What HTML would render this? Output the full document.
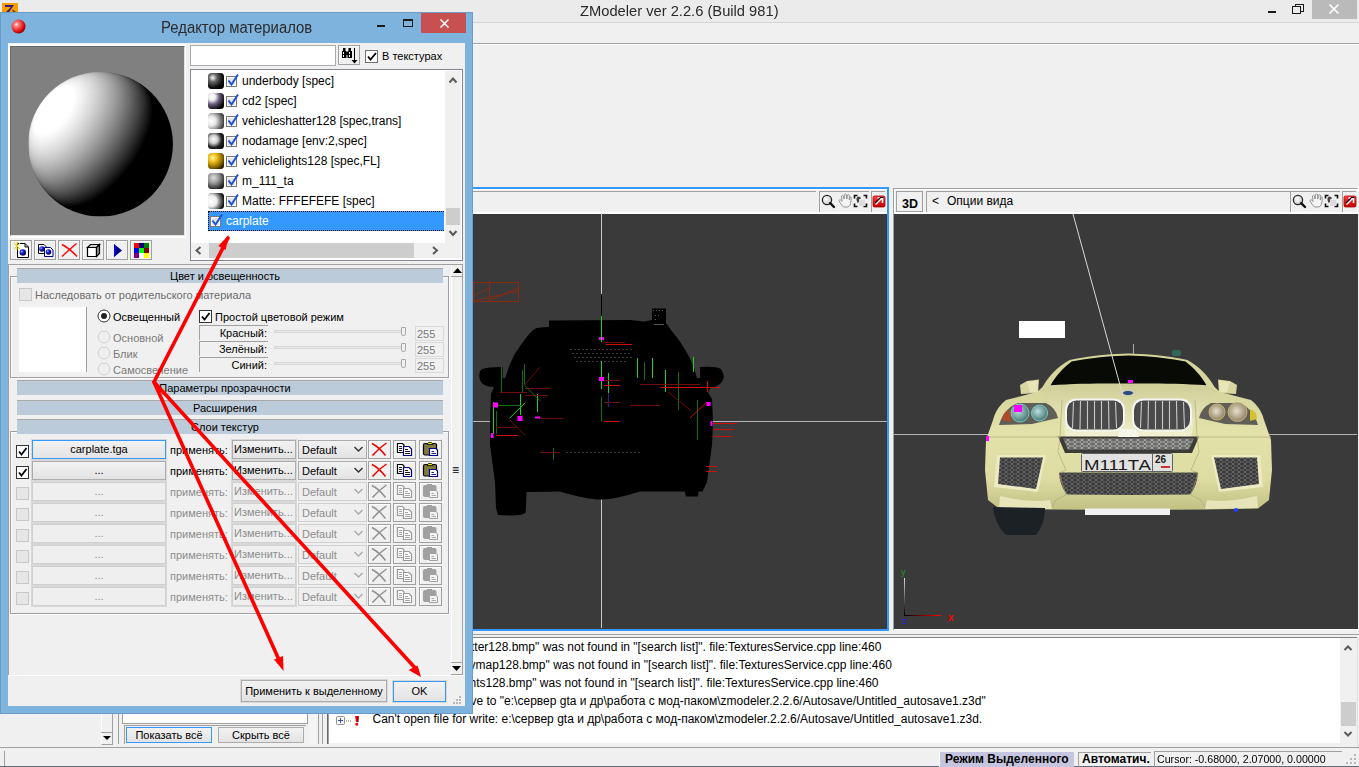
<!DOCTYPE html><html><head><meta charset="utf-8"><style>
*{margin:0;padding:0;box-sizing:border-box}
html,body{width:1359px;height:767px;overflow:hidden;background:#f0f0f0;font-family:"Liberation Sans",sans-serif;}
body div,body svg{position:absolute}
</style></head><body><div style="left:0px;top:0px;width:1359px;height:22px;background:#ebebeb"></div>
<div style="left:0px;top:22px;width:1359px;height:1px;background:#d5d5d5"></div>
<div style="left:580px;top:2px;white-space:pre;font-size:15px;line-height:18px;color:#2a2a2a;transform:scaleX(0.98);transform-origin:0 0">ZModeler ver 2.2.6 (Build 981)</div>
<div style="left:2px;top:3px;width:16px;height:9px;background:#f5a000"></div>
<svg style="left:2px;top:3px" width="16" height="9"><path d="M3 2H12L7 9H4L9 4H3Z" fill="#3a1a80"/><path d="M10 6L14 9H11Z" fill="#6a3a10"/></svg>
<div style="left:1268px;top:11px;width:8px;height:2px;background:#1a1a1a"></div>
<svg style="left:1292px;top:4px" width="12" height="10"><rect x="3.5" y="0.5" width="8" height="7" fill="none" stroke="#1a1a1a"/><rect x="0.5" y="2.5" width="8" height="7" fill="#ebebeb" stroke="#1a1a1a"/></svg>
<div style="left:1312px;top:0px;width:45px;height:19px;background:#bababa"></div>
<svg style="left:1328px;top:3px" width="12" height="12"><path d="M1.5 1.5L10.5 10.5M10.5 1.5L1.5 10.5" stroke="#fff" stroke-width="1.6"/></svg>
<div style="left:0px;top:43px;width:1359px;height:1px;background:#a0a0a0"></div>
<div style="left:0px;top:44px;width:1359px;height:1px;background:#ffffff"></div>
<div style="left:440px;top:187px;width:449px;height:444px;background:#3399ff"></div>
<div style="left:440px;top:189px;width:447px;height:25px;background:#f0f0f0;border-top:1px solid #fff"></div>
<div style="left:440px;top:212px;width:447px;height:2px;background:#ffffff"></div>
<div style="left:440px;top:214px;width:447px;height:415px;background:#3a3a3a"></div>
<div style="left:440px;top:191px;width:376px;height:21px;border-top:1px solid #a0a0a0;border-left:1px solid #a0a0a0"></div>
<div style="left:819px;top:191px;width:50px;height:21px;border-top:1px solid #a0a0a0;border-left:1px solid #a0a0a0"></div>
<div style="left:871px;top:191px;width:14px;height:21px;border-top:1px solid #a0a0a0;border-left:1px solid #a0a0a0"></div>
<svg style="left:819px;top:191px" width="68" height="21">
<defs><radialGradient id="lens819" cx="0.4" cy="0.4" r="0.6"><stop offset="0" stop-color="#fff"/><stop offset="1" stop-color="#c8c8c8"/></radialGradient>
<linearGradient id="red819" x1="0" y1="0" x2="0" y2="1"><stop offset="0" stop-color="#ff4040"/><stop offset="1" stop-color="#c00000"/></linearGradient></defs>
<circle cx="8" cy="9" r="4.6" fill="url(#lens819)" stroke="#2a2a2a" stroke-width="1.3"/>
<path d="M11.2 12.2L15 16" stroke="#111" stroke-width="2.4" stroke-linecap="round"/>
<path d="M20.5 11 Q19.5 9 21 8.5 L23 10.5 L22.5 5 Q23.5 3.5 24.5 5 L25 8 L25.5 3.5 Q26.5 2.5 27.5 3.5 L27.8 8 L28.5 4 Q29.5 3 30.3 4.2 L30.3 9 L31 6 Q32 5.5 32.3 6.8 L31.8 12 Q31 15 29 16 L24.5 16 Q22.5 14 20.5 11Z" fill="#f4f4f4" stroke="#8a8a8a" stroke-width="0.9"/>
<path d="M35.5 7.5V4.5H38.5M44.5 4.5H47.5V7.5M47.5 12.5V15.5H44.5M38.5 15.5H35.5V12.5" stroke="#111" stroke-width="1.6" fill="none"/>
<rect x="40" y="9" width="6" height="6" fill="#dcdcdc"/>
<path d="M37.5 9Q37 6 39.5 5.5Q41.5 5.5 42 7.5L40 8.5L40 11L38.5 12Z" fill="#444"/>
<rect x="54" y="5" width="12" height="11" rx="1.5" fill="url(#red819)" stroke="#b00000" stroke-width="0.8"/>
<path d="M56.5 13.5L63 7M58.5 7H63.5V12" stroke="#fff" stroke-width="1.5" fill="none"/>
<path d="M56 12L61.5 6.5H64.5" stroke="#000" stroke-width="1.1" fill="none"/>
</svg>
<svg style="left:0;top:0" width="889" height="631" viewBox="0 0 889 631">
<line x1="601.5" y1="213" x2="601.5" y2="628" stroke="#c8c8c8" stroke-width="1"/>
<line x1="473" y1="421.5" x2="887" y2="421.5" stroke="#b4b4b4" stroke-width="1"/>
<g stroke="#8a2a10" stroke-width="1" fill="none"><rect x="473.5" y="282.5" width="45" height="19"/><line x1="489.5" y1="282" x2="489.5" y2="302"/><line x1="473" y1="296" x2="489" y2="288"/><line x1="489" y1="301" x2="518" y2="288"/><line x1="473" y1="301" x2="518" y2="291"/></g>
<line x1="601.5" y1="294" x2="601.5" y2="318" stroke="#000" stroke-width="1"/>
<path fill="#000" d="M549 323 L549 320.5 L630 320 L644 321.5 L652 320 L667 324 L670.5 329.5 Q679 339 685 349.5 Q691 359 694 368 L697 378 L700 378 L700 367 Q716 366 721 369 Q725 375 723 380 Q720 386 710 388.5 L708 392.5 L712 399 L713 421 L712 445 L707 482 L702.5 491.5 L698.5 491.5 L698 496.5 L686 496.5 L684.6 491.5 L640 491.5 Q615 499.5 601 499.5 Q587 499.5 560 491.5 L526.6 492 L525.6 513 Q522 515.5 510 515.5 L498 515 L496 508 L495 482 L490 445 L490 421 L491 394 L494 387 Q482 386.5 480 380 Q478 372 482 369 Q487 367 502.6 367 L502.6 378 L505.2 378.2 L509 366.5 L514.3 354.8 L520.8 345 L527.4 335.9 L532.6 330.6 L536.5 328 L549 326.7 Z"/>
<path fill="#000" d="M652 308.5 L666 308.5 L666 326 L652 326 Z"/>
<g stroke="#8a8a8a" stroke-width="1" stroke-dasharray="2 2" opacity="0.4"><line x1="570" y1="349.5" x2="632" y2="349.5"/><line x1="572" y1="353.5" x2="630" y2="353.5"/><line x1="574" y1="357.5" x2="632" y2="357.5"/><line x1="576" y1="361.5" x2="628" y2="361.5"/><line x1="566" y1="452.5" x2="640" y2="452.5"/></g>
<g fill="#555"><rect x="653" y="310" width="1" height="1"/><rect x="656" y="310" width="1" height="1"/><rect x="659" y="310" width="1" height="1"/><rect x="662" y="310" width="1" height="1"/><rect x="655" y="315" width="1" height="1"/><rect x="658" y="315" width="1" height="1"/><rect x="655" y="319" width="1" height="1"/><rect x="654" y="324" width="10" height="1"/></g>
<g stroke-width="1">
<line x1="501.5" y1="367" x2="501.5" y2="392" stroke="#0f6e0f"/>
<line x1="522.5" y1="370" x2="522.5" y2="392" stroke="#0f6e0f"/>
<line x1="524.5" y1="364" x2="524.5" y2="385" stroke="#0f6e0f"/>
<line x1="520.5" y1="394" x2="520.5" y2="415" stroke="#22d022"/>
<line x1="537.5" y1="394" x2="537.5" y2="412" stroke="#22d022"/>
<line x1="493.5" y1="402" x2="493.5" y2="434" stroke="#22d022"/>
<line x1="496.5" y1="411" x2="496.5" y2="434" stroke="#0f6e0f"/>
<line x1="601.5" y1="316" x2="601.5" y2="342" stroke="#22d022"/>
<line x1="601.5" y1="361" x2="601.5" y2="389" stroke="#22d022"/>
<line x1="601.5" y1="397" x2="601.5" y2="421" stroke="#0f6e0f"/>
<line x1="608.5" y1="373" x2="608.5" y2="393" stroke="#22d022"/>
<line x1="608.5" y1="393" x2="608.5" y2="407" stroke="#1a2a8a"/>
<line x1="553.5" y1="448" x2="553.5" y2="460" stroke="#0f6e0f"/>
<line x1="637.5" y1="358" x2="637.5" y2="378" stroke="#22d022"/>
<line x1="644.5" y1="362" x2="644.5" y2="380" stroke="#0f6e0f"/>
<line x1="652.5" y1="358" x2="652.5" y2="378" stroke="#22d022"/>
<line x1="665.5" y1="370" x2="665.5" y2="392" stroke="#22d022"/>
<line x1="678.5" y1="372" x2="678.5" y2="410" stroke="#0f6e0f"/>
<line x1="693.5" y1="357" x2="693.5" y2="372" stroke="#22d022"/>
<line x1="697.5" y1="400" x2="697.5" y2="440" stroke="#0f6e0f"/>
<line x1="707.5" y1="381" x2="707.5" y2="392" stroke="#c81010"/>
<line x1="525" y1="388.5" x2="550" y2="388.5" stroke="#700c0c"/>
<line x1="500" y1="392.5" x2="527" y2="392.5" stroke="#700c0c"/>
<line x1="525" y1="395.5" x2="548" y2="395.5" stroke="#700c0c"/>
<line x1="539" y1="418.5" x2="563" y2="418.5" stroke="#700c0c"/>
<line x1="496" y1="427.5" x2="518" y2="427.5" stroke="#700c0c"/>
<line x1="496" y1="435.5" x2="518" y2="435.5" stroke="#c81010"/>
<line x1="604" y1="380.5" x2="620" y2="380.5" stroke="#700c0c"/>
<line x1="604" y1="385.5" x2="620" y2="385.5" stroke="#c81010"/>
<line x1="604" y1="402.5" x2="620" y2="402.5" stroke="#700c0c"/>
<line x1="604" y1="421.5" x2="620" y2="421.5" stroke="#c81010"/>
<line x1="604" y1="342.5" x2="625" y2="342.5" stroke="#700c0c"/>
<line x1="606" y1="344.5" x2="632" y2="344.5" stroke="#c81010"/>
<line x1="640" y1="384.5" x2="700" y2="384.5" stroke="#700c0c"/>
<line x1="660" y1="387.5" x2="720" y2="387.5" stroke="#c81010"/>
<line x1="630" y1="405.5" x2="660" y2="405.5" stroke="#700c0c"/>
<line x1="713" y1="423.5" x2="737" y2="423.5" stroke="#c81010"/>
<line x1="713" y1="429.5" x2="734" y2="429.5" stroke="#c81010"/>
<line x1="713" y1="436.5" x2="732" y2="436.5" stroke="#c81010"/>
<line x1="706" y1="466.5" x2="717" y2="466.5" stroke="#c81010"/>
<line x1="706" y1="471.5" x2="717" y2="471.5" stroke="#c81010"/>
<line x1="540" y1="452.5" x2="560" y2="452.5" stroke="#700c0c"/>
<line x1="524.6" y1="385.4" x2="540.3" y2="401" stroke="#0f6e0f"/><line x1="509.7" y1="418" x2="525.4" y2="402.6" stroke="#22d022"/><line x1="497" y1="405.5" x2="521" y2="405.5" stroke="#0f6e0f"/>
<line x1="509.7" y1="419.8" x2="525.4" y2="435.5" stroke="#700c0c"/><line x1="524.6" y1="385" x2="540" y2="367" stroke="#700c0c"/><line x1="690" y1="418" x2="707" y2="402" stroke="#c81010"/><line x1="668" y1="392" x2="690" y2="410" stroke="#700c0c"/>
</g>
<g fill="#ff00ff"><rect x="599" y="337" width="2" height="3"/><rect x="602" y="337" width="2" height="3"/><rect x="599" y="377" width="5" height="4"/><rect x="493" y="402.5" width="5" height="5"/><rect x="517.5" y="416" width="5" height="5"/><rect x="535" y="416.5" width="5" height="2"/><rect x="491" y="433" width="2.5" height="5"/><rect x="706.5" y="402" width="4" height="4"/><rect x="710.5" y="421" width="2" height="5"/></g>
</svg>
<div style="left:893px;top:188px;width:465px;height:442px;background:#f0f0f0;border-top:1px solid #a0a0a0;border-left:1px solid #a0a0a0;border-right:1px solid #ffffff"></div>
<div style="left:894px;top:189px;width:463px;height:24px;border-top:1px solid #fff;border-left:1px solid #fff"></div>
<div style="left:894px;top:212px;width:463px;height:2px;background:#fff"></div>
<div style="left:894px;top:214px;width:464px;height:415px;background:#3a3a3a"></div>
<div style="left:894px;top:629px;width:464px;height:1px;background:#fff"></div>
<div style="left:896px;top:191px;width:27px;height:21px;border-top:1px solid #a0a0a0;border-left:1px solid #a0a0a0;border-right:1px solid #a0a0a0;border-bottom:1px solid #a0a0a0;background:#f0f0f0"></div>
<div style="left:902px;top:197px;white-space:pre;font-size:12.5px;line-height:14px;color:#000;font-weight:bold">3D</div>
<div style="left:926px;top:191px;width:364px;height:21px;border-top:1px solid #a0a0a0;border-left:1px solid #a0a0a0"></div>
<div style="left:932px;top:194px;white-space:pre;font-size:12px;line-height:14px;color:#000">&lt;</div>
<div style="left:947px;top:194px;white-space:pre;font-size:12px;line-height:14px;color:#000">Опции вида</div>
<div style="left:1290px;top:191px;width:50px;height:21px;border-top:1px solid #a0a0a0;border-left:1px solid #a0a0a0"></div>
<div style="left:1342px;top:191px;width:14px;height:21px;border-top:1px solid #a0a0a0;border-left:1px solid #a0a0a0"></div>
<svg style="left:1290px;top:191px" width="68" height="21">
<defs><radialGradient id="lens1290" cx="0.4" cy="0.4" r="0.6"><stop offset="0" stop-color="#fff"/><stop offset="1" stop-color="#c8c8c8"/></radialGradient>
<linearGradient id="red1290" x1="0" y1="0" x2="0" y2="1"><stop offset="0" stop-color="#ff4040"/><stop offset="1" stop-color="#c00000"/></linearGradient></defs>
<circle cx="8" cy="9" r="4.6" fill="url(#lens1290)" stroke="#2a2a2a" stroke-width="1.3"/>
<path d="M11.2 12.2L15 16" stroke="#111" stroke-width="2.4" stroke-linecap="round"/>
<path d="M20.5 11 Q19.5 9 21 8.5 L23 10.5 L22.5 5 Q23.5 3.5 24.5 5 L25 8 L25.5 3.5 Q26.5 2.5 27.5 3.5 L27.8 8 L28.5 4 Q29.5 3 30.3 4.2 L30.3 9 L31 6 Q32 5.5 32.3 6.8 L31.8 12 Q31 15 29 16 L24.5 16 Q22.5 14 20.5 11Z" fill="#f4f4f4" stroke="#8a8a8a" stroke-width="0.9"/>
<path d="M35.5 7.5V4.5H38.5M44.5 4.5H47.5V7.5M47.5 12.5V15.5H44.5M38.5 15.5H35.5V12.5" stroke="#111" stroke-width="1.6" fill="none"/>
<rect x="40" y="9" width="6" height="6" fill="#dcdcdc"/>
<path d="M37.5 9Q37 6 39.5 5.5Q41.5 5.5 42 7.5L40 8.5L40 11L38.5 12Z" fill="#444"/>
<rect x="54" y="5" width="12" height="11" rx="1.5" fill="url(#red1290)" stroke="#b00000" stroke-width="0.8"/>
<path d="M56.5 13.5L63 7M58.5 7H63.5V12" stroke="#fff" stroke-width="1.5" fill="none"/>
<path d="M56 12L61.5 6.5H64.5" stroke="#000" stroke-width="1.1" fill="none"/>
</svg>
<svg style="left:0;top:0" width="1359" height="631" viewBox="0 0 1359 631">
<defs>
<linearGradient id="bodyg" gradientUnits="userSpaceOnUse" x1="0" y1="353" x2="0" y2="510"><stop offset="0" stop-color="#d4d39a"/><stop offset="0.3" stop-color="#d8d7a0"/><stop offset="0.5" stop-color="#e3e2aa"/><stop offset="0.8" stop-color="#dddca2"/><stop offset="1" stop-color="#c2c184"/></linearGradient>
<linearGradient id="hoodg" gradientUnits="userSpaceOnUse" x1="0" y1="384" x2="0" y2="437"><stop offset="0" stop-color="#cfce98"/><stop offset="0.6" stop-color="#e2e1b2"/><stop offset="1" stop-color="#f2f1d4"/></linearGradient>
<radialGradient id="lampT" cx="0.4" cy="0.4" r="0.6"><stop offset="0" stop-color="#b8e0dc"/><stop offset="1" stop-color="#4a7a78"/></radialGradient>
<radialGradient id="lampB" cx="0.45" cy="0.45" r="0.6"><stop offset="0" stop-color="#e8e0c8"/><stop offset="1" stop-color="#8a7e62"/></radialGradient>
<linearGradient id="axx" gradientUnits="userSpaceOnUse" x1="904" y1="0" x2="941" y2="0"><stop offset="0" stop-color="#000"/><stop offset="1" stop-color="#f00"/></linearGradient>
<linearGradient id="axy" gradientUnits="userSpaceOnUse" x1="0" y1="615" x2="0" y2="578"><stop offset="0" stop-color="#000"/><stop offset="1" stop-color="#ddd"/></linearGradient>
<pattern id="mesh" width="6" height="4" patternUnits="userSpaceOnUse"><rect width="6" height="4" fill="#3a3a3a"/><path d="M0 2H2L3 0.5H5L6 2M2 2L3 3.5H5L6 2" stroke="#7a7a7a" stroke-width="0.6" fill="none"/></pattern>
<pattern id="mesh2" width="7" height="4" patternUnits="userSpaceOnUse"><rect width="7" height="4" fill="#6a6a68"/><path d="M0 2H2L3 0.5H5L6 2H7M2 2L3 3.5H5L6 2" stroke="#b8b8b4" stroke-width="0.7" fill="none"/></pattern>
<g id="halfdet">
<path d="M1020 385 L1027 381 L1039 379.5 L1038 393 L1021 394 Z" fill="#d8d6a0"/>
<path d="M1027 382 L1038 380.5 L1037.5 392 L1030 392Z" fill="#e8e6b8"/>
<path d="M999 425 Q1004 408 1018 403 L1046 403 Q1056 408 1058 418 L1032 424 Z" fill="#5f5f58"/>
<path d="M1062 400 L1060 437 L1058 452 L1066 470 L1059 473 L1066 495 L1056 500 L1051 509" stroke="#a8a572" stroke-width="1" opacity="0.6" fill="none"/>
<path d="M997 455 L1046 455 L1038 492 L994 487 Z" fill="#ecebc2"/>
<path d="M1000 457.5 L1043 457.5 L1036 489 L998 484 Z" fill="url(#mesh)"/>
<path d="M1000 496 Q1030 503 1050 500 L1052 509 L999 508 Z" fill="#e6e5ba"/>
<path d="M986 437 L1060 437" stroke="#bdbb88" stroke-width="1"/>
<rect x="1065" y="398.5" width="60" height="33" rx="11" fill="#f4f4f0"/>
<rect x="1067" y="400.5" width="56" height="29" rx="9.5" fill="#4a4a4a"/>
<g stroke="#c8c8c8" stroke-width="1.1"><line x1="1073.5" y1="402" x2="1072.5" y2="428"/><line x1="1080.5" y1="401" x2="1080" y2="429"/><line x1="1087.5" y1="401" x2="1087.5" y2="429"/><line x1="1094.5" y1="401" x2="1094.5" y2="429"/><line x1="1101.5" y1="401" x2="1101.5" y2="429"/><line x1="1108.5" y1="401" x2="1109" y2="429"/><line x1="1115.5" y1="402" x2="1116.5" y2="428"/></g>
</g>
</defs>
<line x1="894" y1="434.5" x2="1357" y2="434.5" stroke="#b4b4b4" stroke-width="1"/>
<rect x="1019" y="321" width="46" height="17" fill="#fff"/>
<line x1="1133.5" y1="344" x2="1133.5" y2="356" stroke="#aaa"/>
<rect x="1172" y="350" width="9" height="6" rx="2" fill="#2f6a58"/>
<path d="M1128.50 353.50 L1122.78 353.65 L1117.03 353.92 L1111.24 354.29 L1105.41 354.76 L1099.55 355.35 L1093.65 356.04 L1087.72 356.85 L1081.75 357.76 L1075.74 358.77 L1069.70 359.90 L1066.24 361.99 L1062.95 364.22 L1059.82 366.58 L1056.85 369.08 L1054.05 371.73 L1051.41 374.50 L1048.94 377.42 L1046.63 380.48 L1044.48 383.67 L1042.50 387.00 L1037.00 392.00 L1006.00 400.00 L1004.07 401.64 L1002.28 403.36 L1000.63 405.16 L999.12 407.04 L997.75 409.00 L996.52 411.04 L995.43 413.16 L994.48 415.36 L993.67 417.64 L993.00 420.00 L986.00 440.00 L985.00 470.00 L988.00 500.00 L999.00 508.50 L1050.00 509.50 L1128.50 510.00 L1128.50 510.00 L1207.00 509.50 L1258.00 508.50 L1269.00 500.00 L1272.00 470.00 L1271.00 440.00 L1264.00 420.00 L1263.33 417.64 L1262.52 415.36 L1261.57 413.16 L1260.48 411.04 L1259.25 409.00 L1257.88 407.04 L1256.37 405.16 L1254.72 403.36 L1252.93 401.64 L1251.00 400.00 L1220.00 392.00 L1214.50 387.00 L1212.52 383.67 L1210.37 380.48 L1208.06 377.42 L1205.59 374.50 L1202.95 371.73 L1200.15 369.08 L1197.18 366.58 L1194.05 364.22 L1190.76 361.99 L1187.30 359.90 L1181.26 358.77 L1175.25 357.76 L1169.28 356.85 L1163.35 356.04 L1157.45 355.35 L1151.59 354.76 L1145.76 354.29 L1139.97 353.92 L1134.22 353.65 L1128.50 353.50Z" fill="url(#bodyg)"/>
<path d="M1128.50 355.50 L1122.80 355.65 L1117.10 355.90 L1111.40 356.25 L1105.70 356.70 L1100.00 357.25 L1094.30 357.90 L1088.60 358.65 L1082.90 359.50 L1077.20 360.45 L1071.50 361.50 L1068.86 363.63 L1066.34 365.81 L1063.95 368.04 L1061.68 370.33 L1059.53 372.68 L1057.50 375.07 L1055.59 377.52 L1053.80 380.03 L1052.14 382.59 L1050.60 385.20 L1058.47 384.79 L1066.32 384.43 L1074.16 384.12 L1081.98 383.87 L1089.78 383.68 L1097.56 383.53 L1105.32 383.44 L1113.06 383.41 L1120.79 383.43 L1128.50 383.50 L1128.50 383.50 L1136.21 383.43 L1143.94 383.41 L1151.68 383.44 L1159.44 383.53 L1167.22 383.68 L1175.02 383.87 L1182.84 384.12 L1190.68 384.43 L1198.53 384.79 L1206.40 385.20 L1204.86 382.59 L1203.20 380.03 L1201.41 377.52 L1199.50 375.07 L1197.47 372.68 L1195.32 370.33 L1193.05 368.04 L1190.66 365.81 L1188.14 363.63 L1185.50 361.50 L1179.80 360.45 L1174.10 359.50 L1168.40 358.65 L1162.70 357.90 L1157.00 357.25 L1151.30 356.70 L1145.60 356.25 L1139.90 355.90 L1134.20 355.65 L1128.50 355.50Z" fill="#080a06"/>
<path d="M1128.50 384.00 L1120.79 383.93 L1113.04 383.92 L1105.26 383.97 L1097.46 384.08 L1089.62 384.25 L1081.76 384.48 L1073.87 384.77 L1065.94 385.12 L1057.98 385.53 L1050.00 386.00 L1040.00 390.00 L1062.00 420.00 L1066.00 437.00 L1128.50 437.00 L1128.50 437.00 L1191.00 437.00 L1195.00 420.00 L1217.00 390.00 L1207.00 386.00 L1199.02 385.53 L1191.06 385.12 L1183.13 384.77 L1175.24 384.48 L1167.38 384.25 L1159.54 384.08 L1151.74 383.97 L1143.96 383.92 L1136.21 383.93 L1128.50 384.00Z" fill="url(#hoodg)"/>
<path d="M1128.50 436.50 L1058.00 436.50 L1065.00 453.00 L1128.50 453.00 L1128.50 453.00 L1192.00 453.00 L1199.00 436.50 L1128.50 436.50Z" fill="#3a3a36"/>
<path d="M1128.50 438.50 L1063.00 438.50 L1068.00 449.50 L1128.50 449.50 L1128.50 449.50 L1189.00 449.50 L1194.00 438.50 L1128.50 438.50Z" fill="url(#mesh2)"/>
<path d="M1128.50 472.50 L1059.00 472.50 L1059.26 475.15 L1059.64 477.70 L1060.14 480.15 L1060.76 482.50 L1061.50 484.75 L1062.36 486.90 L1063.34 488.95 L1064.44 490.90 L1065.66 492.75 L1067.00 494.50 L1128.50 495.00 L1128.50 495.00 L1190.00 494.50 L1191.34 492.75 L1192.56 490.90 L1193.66 488.95 L1194.64 486.90 L1195.50 484.75 L1196.24 482.50 L1196.86 480.15 L1197.36 477.70 L1197.74 475.15 L1198.00 472.50 L1128.50 472.50Z" fill="url(#mesh)"/>
<use href="#halfdet"/>
<use href="#halfdet" transform="translate(2257 0) scale(-1 1)"/>
<path d="M1128.50 429.00 L1120.00 429.00 L1118.00 437.00 L1128.50 437.00 L1128.50 437.00 L1139.00 437.00 L1137.00 429.00 L1128.50 429.00Z" fill="#f6f6e8"/>
<circle cx="1020" cy="413" r="9" fill="url(#lampT)" stroke="#7cc8c4" stroke-width="1"/>
<circle cx="1039.5" cy="413" r="8" fill="url(#lampT)" stroke="#7cc8c4" stroke-width="1"/>
<path d="M1002 420 Q1003 411 1010 410 L1011 422 Z" fill="#b04a28"/>
<rect x="1014" y="405" width="8" height="7" fill="#ff00ff"/>
<circle cx="1217" cy="412" r="8" fill="url(#lampB)" stroke="#c8b070" stroke-width="1"/>
<circle cx="1237.5" cy="412" r="9.5" fill="url(#lampB)" stroke="#c8b070" stroke-width="1"/>
<path d="M1250 409 Q1257 411 1257 419 L1250 421 Z" fill="#d4c030"/>
<ellipse cx="1128" cy="393" rx="5.5" ry="2.5" fill="#2a4a78" stroke="#d8d8d8" stroke-width="0.8"/>
<rect x="1081.5" y="453.5" width="91" height="18" rx="1" fill="#e2e2e0" stroke="#606060"/>
<line x1="1152.5" y1="454" x2="1152.5" y2="471" stroke="#606060"/>
<text x="1084" y="469.5" font-family="Liberation Sans" font-size="15.5" fill="#1a1a1a" textLength="67" lengthAdjust="spacingAndGlyphs">М111ТА</text>
<text x="1155" y="463" font-family="Liberation Sans" font-size="10" font-weight="bold" fill="#1a1a1a">26</text>
<rect x="1161" y="466" width="9" height="2" fill="#d03030"/>
<path d="M993 507 L1045 508 Q1045 524 1036 535 L1006 535 Q995 525 993 507 Z" fill="#1c2126"/>
<rect x="1085" y="508.5" width="85" height="6.5" fill="#f0f0f0"/>
<line x1="1073" y1="214" x2="1123" y2="396" stroke="#d8d8d8" stroke-width="1"/>
<rect x="1128" y="380" width="5" height="3" fill="#ff00ff"/>
<rect x="986" y="436" width="3" height="5" fill="#ff00ff"/>
<circle cx="1236" cy="510" r="2" fill="#2040ff"/>
<line x1="904.5" y1="578" x2="904.5" y2="615" stroke="url(#axy)" stroke-width="1"/>
<line x1="904" y1="615.5" x2="941" y2="615.5" stroke="url(#axx)" stroke-width="1"/>
<text x="901" y="575" font-family="Liberation Sans" font-size="9" fill="#1a9a1a">y</text>
<text x="948" y="621" font-family="Liberation Sans" font-size="10" font-weight="bold" fill="#ff0000">x</text>
<text x="902" y="624" font-family="Liberation Sans" font-size="9" fill="#2020ff">z</text>
</svg>
<div style="left:0px;top:631px;width:1359px;height:116px;background:#f0f0f0"></div>
<div style="left:327px;top:634px;width:1032px;height:1px;background:#a0a0a0"></div>
<div style="left:327px;top:637px;width:1031px;height:1px;background:#808080"></div>
<div style="left:328px;top:638px;width:1028px;height:105px;background:#ffffff"></div>
<div style="left:1340px;top:638px;width:16px;height:105px;background:#f0f0f0"></div>
<div style="left:1357px;top:637px;width:1px;height:110px;background:#e0e0e0"></div>
<div style="left:1341px;top:702px;width:15px;height:24px;background:#cdcdcd"></div>
<svg style="left:1340px;top:638px" width="16" height="105"><path d="M4.5 12L8 8.5L11.5 12" stroke="#5a5a5a" stroke-width="2" fill="none"/><path d="M4.5 94L8 97.5L11.5 94" stroke="#5a5a5a" stroke-width="2" fill="none"/></svg>
<div style="left:271px;top:639px;width:200px;text-align:right;white-space:pre;font-size:12px;line-height:16px;color:#000">Texture "vehiclesha</div>
<div style="left:471px;top:639px;white-space:pre;font-size:12px;line-height:16px;color:#000">tter128.bmp" was not found in "[search list]". file:TexturesService.cpp line:460</div>
<div style="left:269.5px;top:657px;width:200px;text-align:right;white-space:pre;font-size:12px;line-height:16px;color:#000">Texture "vehiclegre</div>
<div style="left:469.5px;top:657px;white-space:pre;font-size:12px;line-height:16px;color:#000">ymap128.bmp" was not found in "[search list]". file:TexturesService.cpp line:460</div>
<div style="left:269.5px;top:675px;width:200px;text-align:right;white-space:pre;font-size:12px;line-height:16px;color:#000">Texture "vehiclelig</div>
<div style="left:469.5px;top:675px;white-space:pre;font-size:12px;line-height:16px;color:#000">hts128.bmp" was not found in "[search list]". file:TexturesService.cpp line:460</div>
<div style="left:270.5px;top:693px;width:200px;text-align:right;white-space:pre;font-size:12px;line-height:16px;color:#000">Autosa</div>
<div style="left:470.5px;top:693px;white-space:pre;font-size:12px;line-height:16px;color:#000">ve to "e:\сервер gta и др\работа с мод-паком\zmodeler.2.2.6/Autosave/Untitled_autosave1.z3d"</div>
<div style="left:372.5px;top:711px;white-space:pre;font-size:12px;line-height:16px;color:#000">Can't open file for write: e:\сервер gta и др\работа с мод-паком\zmodeler.2.2.6/Autosave/Untitled_autosave1.z3d.</div>
<div style="left:122px;top:705px;width:186px;height:19px;background:#fff;border:1px solid #a0a0a0;border-top:none"></div>
<div style="left:124px;top:725px;width:182px;height:19px;border-top:1px solid #a0a0a0;border-left:1px solid #a0a0a0"></div>
<div style="left:126px;top:727px;width:86px;height:16px;background:linear-gradient(#f2f2f2,#e3e3e3);border:1px solid #3399ff"></div>
<div style="left:126px;top:728px;width:86px;white-space:pre;font-size:11px;line-height:14px;color:#000;text-align:center">Показать всё</div>
<div style="left:218px;top:727px;width:86px;height:16px;background:linear-gradient(#f2f2f2,#e3e3e3);border:1px solid #acacac"></div>
<div style="left:218px;top:728px;width:86px;white-space:pre;font-size:11px;line-height:14px;color:#000;text-align:center">Скрыть всё</div>
<div style="left:101px;top:705px;width:12px;height:40px;background:#f0f0f0;border-left:1px solid #fff;border-right:1px solid #a0a0a0;border-bottom:1px solid #a0a0a0"></div>
<div style="left:101px;top:732px;width:11px;height:1px;background:#a0a0a0"></div>
<svg style="left:103px;top:736px" width="8" height="5"><path d="M0 0H8L4 4Z" fill="#000"/></svg>
<div style="left:118px;top:705px;width:1px;height:39px;background:#a0a0a0"></div>
<div style="left:309px;top:705px;width:9px;height:39px;background:#f4f4f4"></div>
<div style="left:318px;top:705px;width:1px;height:39px;background:#a0a0a0"></div>
<div style="left:322px;top:705px;width:1px;height:39px;background:#a0a0a0"></div>
<div style="left:327px;top:705px;width:1px;height:39px;background:#696969"></div>
<div style="left:328px;top:705px;width:1px;height:39px;background:#a0a0a0"></div>
<svg style="left:336px;top:716px" width="26" height="10"><rect x="0.5" y="0.5" width="8" height="8" rx="1" fill="#fafafa" stroke="#909090"/><path d="M2 4.5H7M4.5 2V7" stroke="#3050a0"/><path d="M10 5H11M12 5H13M14 5H15" stroke="#666"/><path d="M19 0H23L22 6H20Z" fill="#f00"/><rect x="19.5" y="7" width="2.5" height="2.5" fill="#e00"/><path d="M22 1V6" stroke="#000" stroke-width="0.8"/></svg>
<div style="left:0px;top:747px;width:1359px;height:1px;background:#a0a0a0"></div>
<div style="left:0px;top:748px;width:1359px;height:18px;background:#f0f0f0"></div>
<div style="left:0px;top:766px;width:1359px;height:1px;background:#5f6e7c"></div>
<div style="left:4px;top:751px;width:1px;height:15px;background:#a0a0a0"></div>
<div style="left:939px;top:752px;width:135px;height:15px;background:#c5c5e0;border-left:1px solid #fff"></div>
<div style="left:945px;top:752px;white-space:pre;font-size:12px;line-height:14px;font-weight:bold;color:#000">Режим Выделенного</div>
<div style="left:1078px;top:752px;width:73px;height:15px;border-left:1px solid #a0a0a0;border-top:1px solid #a0a0a0"></div>
<div style="left:1082px;top:752px;white-space:pre;font-size:12px;line-height:14px;font-weight:bold;color:#000">Автоматич.</div>
<div style="left:1154px;top:751px;width:188px;height:16px;border-left:1px solid #a0a0a0;border-top:1px solid #a0a0a0"></div>
<div style="left:1157px;top:752px;white-space:pre;font-size:11.5px;line-height:14px;color:#000;transform:scaleX(0.925);transform-origin:0 0">Cursor: -0.68000, 2.07000, 0.00000</div>
<svg style="left:1343px;top:752px" width="16" height="15"><g fill="#b8b8b8"><rect x="11" y="2" width="2" height="2"/><rect x="7" y="6" width="2" height="2"/><rect x="11" y="6" width="2" height="2"/><rect x="3" y="10" width="2" height="2"/><rect x="7" y="10" width="2" height="2"/><rect x="11" y="10" width="2" height="2"/></g></svg>
<div style="left:0px;top:12px;width:473px;height:702px;background:#7eb3de;border:1px solid #6a9cc8"></div>
<div style="left:8px;top:43px;width:457px;height:663px;background:#f0f0f0"></div>
<div style="left:161px;top:19px;white-space:pre;font-size:16px;line-height:18px;color:#2b2b2b;transform:scaleX(0.93);transform-origin:0 0">Редактор материалов</div>
<svg style="left:11px;top:19px" width="16" height="16"><defs><radialGradient id="rb" cx="35%" cy="35%" r="65%"><stop offset="0" stop-color="#fff"/><stop offset=".25" stop-color="#ff7a7a"/><stop offset=".8" stop-color="#e01010"/><stop offset="1" stop-color="#900"/></radialGradient></defs><circle cx="7.5" cy="7.5" r="7" fill="url(#rb)"/></svg>
<div style="left:377px;top:25px;width:8px;height:2px;background:#1a1a1a"></div>
<div style="left:403px;top:19px;width:10px;height:8px;border:1px solid #1a1a1a;border-top-width:2px"></div>
<div style="left:421px;top:13px;width:45px;height:20px;background:#c75050"></div>
<svg style="left:437px;top:16px" width="14" height="14"><path d="M3.5 3.5L11.5 11.5M11.5 3.5L3.5 11.5" stroke="#fff" stroke-width="1.5"/></svg>
<div style="left:8px;top:44px;width:178px;height:194px;background:#fff"></div>
<div style="left:10px;top:46px;width:175px;height:190px;background:#808080;border-top:1px solid #696969;border-left:1px solid #696969;border-right:1px solid #e3e3e3;border-bottom:1px solid #e3e3e3"></div>
<svg style="left:0;top:0" width="190" height="240"><defs>
<linearGradient id="sphlg" gradientUnits="userSpaceOnUse" x1="158.83" y1="187.09" x2="42.17" y2="101.31"><stop offset="0" stop-color="#000"/><stop offset="1" stop-color="#fff"/></linearGradient>
<radialGradient id="sphdm" gradientUnits="userSpaceOnUse" cx="72.4" cy="72.4" r="72.4"><stop offset="0.0000" stop-color="rgb(255,255,255)"/><stop offset="0.0208" stop-color="rgb(255,255,255)"/><stop offset="0.0417" stop-color="rgb(255,255,255)"/><stop offset="0.0625" stop-color="rgb(255,255,255)"/><stop offset="0.0833" stop-color="rgb(254,254,254)"/><stop offset="0.1042" stop-color="rgb(254,254,254)"/><stop offset="0.1250" stop-color="rgb(253,253,253)"/><stop offset="0.1458" stop-color="rgb(252,252,252)"/><stop offset="0.1667" stop-color="rgb(251,251,251)"/><stop offset="0.1875" stop-color="rgb(250,250,250)"/><stop offset="0.2083" stop-color="rgb(249,249,249)"/><stop offset="0.2292" stop-color="rgb(248,248,248)"/><stop offset="0.2500" stop-color="rgb(247,247,247)"/><stop offset="0.2708" stop-color="rgb(245,245,245)"/><stop offset="0.2917" stop-color="rgb(244,244,244)"/><stop offset="0.3125" stop-color="rgb(242,242,242)"/><stop offset="0.3333" stop-color="rgb(240,240,240)"/><stop offset="0.3542" stop-color="rgb(238,238,238)"/><stop offset="0.3750" stop-color="rgb(236,236,236)"/><stop offset="0.3958" stop-color="rgb(234,234,234)"/><stop offset="0.4167" stop-color="rgb(232,232,232)"/><stop offset="0.4375" stop-color="rgb(229,229,229)"/><stop offset="0.4583" stop-color="rgb(227,227,227)"/><stop offset="0.4792" stop-color="rgb(224,224,224)"/><stop offset="0.5000" stop-color="rgb(221,221,221)"/><stop offset="0.5208" stop-color="rgb(218,218,218)"/><stop offset="0.5417" stop-color="rgb(214,214,214)"/><stop offset="0.5625" stop-color="rgb(211,211,211)"/><stop offset="0.5833" stop-color="rgb(207,207,207)"/><stop offset="0.6042" stop-color="rgb(203,203,203)"/><stop offset="0.6250" stop-color="rgb(199,199,199)"/><stop offset="0.6458" stop-color="rgb(195,195,195)"/><stop offset="0.6667" stop-color="rgb(190,190,190)"/><stop offset="0.6875" stop-color="rgb(185,185,185)"/><stop offset="0.7083" stop-color="rgb(180,180,180)"/><stop offset="0.7292" stop-color="rgb(175,175,175)"/><stop offset="0.7500" stop-color="rgb(169,169,169)"/><stop offset="0.7708" stop-color="rgb(162,162,162)"/><stop offset="0.7917" stop-color="rgb(156,156,156)"/><stop offset="0.8125" stop-color="rgb(149,149,149)"/><stop offset="0.8333" stop-color="rgb(141,141,141)"/><stop offset="0.8542" stop-color="rgb(133,133,133)"/><stop offset="0.8750" stop-color="rgb(123,123,123)"/><stop offset="0.8958" stop-color="rgb(113,113,113)"/><stop offset="0.9167" stop-color="rgb(102,102,102)"/><stop offset="0.9375" stop-color="rgb(89,89,89)"/><stop offset="0.9583" stop-color="rgb(73,73,73)"/><stop offset="0.9792" stop-color="rgb(52,52,52)"/><stop offset="1.0000" stop-color="rgb(0,0,0)"/></radialGradient>
<rect id="sphdome" x="0" y="0" width="144.8" height="144.8" fill="url(#sphdm)"/>
<filter id="sphfl" filterUnits="userSpaceOnUse" x="28.099999999999994" y="71.79999999999998" width="144.8" height="144.8" color-interpolation-filters="sRGB">
<feImage href="#sphdome" result="dome"/>
<feComposite in="SourceGraphic" in2="dome" operator="arithmetic" k1="0" k2="1.8584" k3="0.5504" k4="-0.9292"/>
</filter>
<clipPath id="sphcp"><circle cx="100.5" cy="144.2" r="72.4"/></clipPath>
</defs>
<g clip-path="url(#sphcp)"><rect x="28.099999999999994" y="71.79999999999998" width="144.8" height="144.8" fill="url(#sphlg)" filter="url(#sphfl)"/></g></svg>
<div style="left:190px;top:45px;width:146px;height:21px;background:#fff;border:1px solid #acacac"></div>
<div style="left:338px;top:45px;width:22px;height:20px;background:#f0f0f0;border:1px solid #a0a0a0;box-shadow:inset 1px 1px 0 #fff"></div>
<svg style="left:338px;top:45px" width="22" height="20"><rect x="4" y="6" width="4.5" height="7" fill="#000"/><rect x="5" y="3" width="2.5" height="4" fill="#000"/><rect x="9.5" y="6" width="4.5" height="7" fill="#000"/><rect x="10.5" y="3" width="2.5" height="4" fill="#000"/><rect x="8" y="7" width="2" height="3" fill="#000"/><rect x="5" y="7" width="1" height="2" fill="#fff"/><rect x="11" y="7" width="1" height="2" fill="#fff"/><rect x="5" y="10" width="1" height="2" fill="#fff"/><rect x="11" y="10" width="1" height="2" fill="#fff"/><path d="M16.5 3V18" stroke="#000"/><path d="M13.5 15L16.5 18.5L19.5 15Z" fill="#000"/></svg>
<div style="left:365px;top:50px;width:13px;height:13px;background:#fff;border:1px solid #707070"></div>
<svg style="left:366px;top:51px" width="12" height="11"><path d="M2 5.5L4.5 8.5L10 2" stroke="#000" stroke-width="1.8" fill="none"/></svg>
<div style="left:382px;top:49px;white-space:pre;font-size:11px;line-height:14px;color:#000">В текстурах</div>
<div style="left:190px;top:69px;width:273px;height:192px;background:#fff;border:1px solid #828790"></div>
<svg style="left:208px;top:73px" width="16" height="16"><defs><radialGradient id="ic0" cx="0.3" cy="0.3" r="0.85"><stop offset="0" stop-color="#fff"/><stop offset="0.3" stop-color="#666"/><stop offset="0.7" stop-color="#111"/><stop offset="1" stop-color="#000"/></radialGradient></defs><rect x="0" y="0" width="16" height="16" rx="3.5" fill="url(#ic0)"/></svg>
<div style="left:226px;top:76px;width:11px;height:11px;background:#e6e6e6;border:1px solid #7a7a7a;box-shadow:inset 0 0 0 1px #fff"></div>
<svg style="left:226px;top:73px" width="14" height="14"><path d="M2.5 7.5L5.5 11.5L12 1.5" stroke="#1c4fd8" stroke-width="1.9" fill="none"/></svg>
<div style="left:242px;top:73px;white-space:pre;font-size:12px;line-height:16px;color:#000">underbody [spec]</div>
<svg style="left:208px;top:93px" width="16" height="16"><defs><radialGradient id="ic1" cx="0.25" cy="0.25" r="0.85"><stop offset="0" stop-color="#fff"/><stop offset="0.25" stop-color="#eee"/><stop offset="0.55" stop-color="#6a5a7a"/><stop offset="1" stop-color="#000"/></radialGradient></defs><rect x="0" y="0" width="16" height="16" rx="3.5" fill="url(#ic1)"/></svg>
<div style="left:226px;top:96px;width:11px;height:11px;background:#e6e6e6;border:1px solid #7a7a7a;box-shadow:inset 0 0 0 1px #fff"></div>
<svg style="left:226px;top:93px" width="14" height="14"><path d="M2.5 7.5L5.5 11.5L12 1.5" stroke="#1c4fd8" stroke-width="1.9" fill="none"/></svg>
<div style="left:242px;top:93px;white-space:pre;font-size:12px;line-height:16px;color:#000">cd2 [spec]</div>
<svg style="left:208px;top:113px" width="16" height="16"><defs><radialGradient id="ic2" cx="0.2" cy="0.5" r="0.85"><stop offset="0" stop-color="#fff"/><stop offset="0.35" stop-color="#e8e8e8"/><stop offset="0.7" stop-color="#808080"/><stop offset="1" stop-color="#333"/></radialGradient></defs><rect x="0" y="0" width="16" height="16" rx="3.5" fill="url(#ic2)"/></svg>
<div style="left:226px;top:116px;width:11px;height:11px;background:#e6e6e6;border:1px solid #7a7a7a;box-shadow:inset 0 0 0 1px #fff"></div>
<svg style="left:226px;top:113px" width="14" height="14"><path d="M2.5 7.5L5.5 11.5L12 1.5" stroke="#1c4fd8" stroke-width="1.9" fill="none"/></svg>
<div style="left:242px;top:113px;white-space:pre;font-size:12px;line-height:16px;color:#000">vehicleshatter128 [spec,trans]</div>
<svg style="left:208px;top:133px" width="16" height="16"><defs><radialGradient id="ic3" cx="0.35" cy="0.4" r="0.85"><stop offset="0" stop-color="#fff"/><stop offset="0.3" stop-color="#ccc"/><stop offset="0.6" stop-color="#222"/><stop offset="1" stop-color="#000"/></radialGradient></defs><rect x="0" y="0" width="16" height="16" rx="3.5" fill="url(#ic3)"/></svg>
<div style="left:226px;top:136px;width:11px;height:11px;background:#e6e6e6;border:1px solid #7a7a7a;box-shadow:inset 0 0 0 1px #fff"></div>
<svg style="left:226px;top:133px" width="14" height="14"><path d="M2.5 7.5L5.5 11.5L12 1.5" stroke="#1c4fd8" stroke-width="1.9" fill="none"/></svg>
<div style="left:242px;top:133px;white-space:pre;font-size:12px;line-height:16px;color:#000">nodamage [env:2,spec]</div>
<svg style="left:208px;top:153px" width="16" height="16"><defs><radialGradient id="ic4" cx="0.3" cy="0.3" r="0.85"><stop offset="0" stop-color="#fff8b0"/><stop offset="0.3" stop-color="#f0c020"/><stop offset="0.7" stop-color="#8a6a00"/><stop offset="1" stop-color="#201800"/></radialGradient></defs><rect x="0" y="0" width="16" height="16" rx="3.5" fill="url(#ic4)"/></svg>
<div style="left:226px;top:156px;width:11px;height:11px;background:#e6e6e6;border:1px solid #7a7a7a;box-shadow:inset 0 0 0 1px #fff"></div>
<svg style="left:226px;top:153px" width="14" height="14"><path d="M2.5 7.5L5.5 11.5L12 1.5" stroke="#1c4fd8" stroke-width="1.9" fill="none"/></svg>
<div style="left:242px;top:153px;white-space:pre;font-size:12px;line-height:16px;color:#000">vehiclelights128 [spec,FL]</div>
<svg style="left:208px;top:173px" width="16" height="16"><defs><radialGradient id="ic5" cx="0.35" cy="0.3" r="0.85"><stop offset="0" stop-color="#ddd"/><stop offset="0.4" stop-color="#999"/><stop offset="0.8" stop-color="#333"/><stop offset="1" stop-color="#111"/></radialGradient></defs><rect x="0" y="0" width="16" height="16" rx="3.5" fill="url(#ic5)"/></svg>
<div style="left:226px;top:176px;width:11px;height:11px;background:#e6e6e6;border:1px solid #7a7a7a;box-shadow:inset 0 0 0 1px #fff"></div>
<svg style="left:226px;top:173px" width="14" height="14"><path d="M2.5 7.5L5.5 11.5L12 1.5" stroke="#1c4fd8" stroke-width="1.9" fill="none"/></svg>
<div style="left:242px;top:173px;white-space:pre;font-size:12px;line-height:16px;color:#000">m_111_ta</div>
<svg style="left:208px;top:193px" width="16" height="16"><defs><radialGradient id="ic6" cx="0.2" cy="0.5" r="0.85"><stop offset="0" stop-color="#fff"/><stop offset="0.4" stop-color="#eee"/><stop offset="0.75" stop-color="#555"/><stop offset="1" stop-color="#000"/></radialGradient></defs><rect x="0" y="0" width="16" height="16" rx="3.5" fill="url(#ic6)"/></svg>
<div style="left:226px;top:196px;width:11px;height:11px;background:#e6e6e6;border:1px solid #7a7a7a;box-shadow:inset 0 0 0 1px #fff"></div>
<svg style="left:226px;top:193px" width="14" height="14"><path d="M2.5 7.5L5.5 11.5L12 1.5" stroke="#1c4fd8" stroke-width="1.9" fill="none"/></svg>
<div style="left:242px;top:193px;white-space:pre;font-size:12px;line-height:16px;color:#000">Matte: FFFEFEFE [spec]</div>
<div style="left:208px;top:211px;width:236px;height:20px;background:#3399ff;border:1px dotted #000;border-right:none"></div>
<div style="left:210px;top:216px;width:11px;height:11px;background:#e6e6e6;border:1px solid #7a7a7a;box-shadow:inset 0 0 0 1px #fff"></div>
<svg style="left:210px;top:213px" width="14" height="14"><path d="M2.5 7.5L5.5 11.5L12 1.5" stroke="#1c4fd8" stroke-width="1.9" fill="none"/></svg>
<div style="left:226px;top:213px;white-space:pre;font-size:12px;line-height:16px;color:#fff">carplate</div>
<div style="left:445px;top:71px;width:16px;height:172px;background:#f0f0f0"></div>
<div style="left:446px;top:208px;width:14px;height:17px;background:#cdcdcd"></div>
<svg style="left:445px;top:71px" width="16" height="172"><path d="M4.5 11.5L8 7.5L11.5 11.5" stroke="#5a5a5a" stroke-width="2" fill="none"/><path d="M4.5 160L8 164L11.5 160" stroke="#5a5a5a" stroke-width="2" fill="none"/></svg>
<div style="left:191px;top:243px;width:270px;height:15px;background:#f0f0f0"></div>
<div style="left:209px;top:243px;width:205px;height:15px;background:#cdcdcd"></div>
<svg style="left:191px;top:243px" width="254" height="15"><path d="M9.5 4L5.5 7.5L9.5 11" stroke="#5a5a5a" stroke-width="2" fill="none"/><path d="M242 4L246 7.5L242 11" stroke="#5a5a5a" stroke-width="2" fill="none"/></svg>
<div style="left:10px;top:240px;width:22px;height:20px;background:#f0f0f0;border:1px solid #a0a0a0;box-shadow:inset 1px 1px 0 #fff"></div>
<div style="left:34px;top:240px;width:22px;height:20px;background:#f0f0f0;border:1px solid #a0a0a0;box-shadow:inset 1px 1px 0 #fff"></div>
<div style="left:58px;top:240px;width:22px;height:20px;background:#f0f0f0;border:1px solid #a0a0a0;box-shadow:inset 1px 1px 0 #fff"></div>
<div style="left:82px;top:240px;width:22px;height:20px;background:#f0f0f0;border:1px solid #a0a0a0;box-shadow:inset 1px 1px 0 #fff"></div>
<div style="left:106px;top:240px;width:22px;height:20px;background:#f0f0f0;border:1px solid #a0a0a0;box-shadow:inset 1px 1px 0 #fff"></div>
<div style="left:130px;top:240px;width:22px;height:20px;background:#f0f0f0;border:1px solid #a0a0a0;box-shadow:inset 1px 1px 0 #fff"></div>
<svg style="left:0;top:0" width="160" height="262">
<defs><radialGradient id="bsph" cx="0.35" cy="0.35" r="0.7"><stop offset="0" stop-color="#9ff"/><stop offset="0.3" stop-color="#22f"/><stop offset="1" stop-color="#002"/></radialGradient></defs>
<path d="M17.5 243.5H25L28.5 247V257.5H17.5Z" fill="#fff" stroke="#000"/>
<path d="M25 243.5V247H28.5" fill="none" stroke="#000"/>
<g stroke="#e8d800" stroke-width="1"><line x1="14" y1="243" x2="20" y2="249"/><line x1="20" y1="243" x2="14" y2="249"/><line x1="17" y1="242" x2="17" y2="250"/></g>
<circle cx="22.8" cy="252.5" r="3.2" fill="url(#bsph)"/>
<path d="M38.5 244.5H44L46 246.5V253.5H38.5Z" fill="#fff" stroke="#000"/>
<circle cx="42" cy="249" r="2.8" fill="url(#bsph)"/>
<path d="M44.5 247.5H50.5L53 250V256.5H44.5Z" fill="#fff" stroke="#000080"/>
<circle cx="48.5" cy="252" r="2.8" fill="url(#bsph)"/>
<path d="M62 244.5Q69 248 77 256.5M76.5 243.5Q70 249 62 256.5" stroke="#f00" stroke-width="1.4" fill="none"/>
<path d="M87.5 247.5H96.5V256.5H87.5Z" fill="#fff" stroke="#000" stroke-width="1.2"/>
<path d="M87.5 247.5L90.5 244.5H99.5L96.5 247.5Z" fill="#d0d0d0" stroke="#000" stroke-width="1.2"/>
<path d="M96.5 247.5L99.5 244.5V253.5L96.5 256.5Z" fill="#909090" stroke="#000" stroke-width="1.2"/>
<path d="M114 244L122 250.5L114 257Z" fill="#000080"/>
<path d="M114 244V257L115.5 255.5V246Z" fill="#0000ff"/>
<rect x="134" y="243" width="5" height="5" fill="#f00"/><rect x="139" y="243" width="5" height="5" fill="#000080"/><rect x="144" y="243" width="5" height="5" fill="#008000"/>
<rect x="134" y="248" width="5" height="5" fill="#00f"/><rect x="139" y="248" width="5" height="5" fill="#0f0"/><rect x="144" y="248" width="5" height="5" fill="#800000"/>
<rect x="134" y="253" width="5" height="5" fill="#800080"/><rect x="139" y="253" width="5" height="5" fill="#fff"/><rect x="144" y="253" width="5" height="5" fill="#ff0"/>
</svg>
<div style="left:8px;top:264px;width:455px;height:1px;background:#a0a0a0"></div>
<div style="left:8px;top:264px;width:1px;height:411px;background:#a0a0a0"></div>
<div style="left:8px;top:675px;width:457px;height:1px;background:#fff"></div>
<div style="left:451px;top:265px;width:11px;height:410px;background:#f0f0f0;border-left:1px solid #fff"></div>
<div style="left:451px;top:276px;width:11px;height:1px;background:#a0a0a0"></div>
<svg style="left:453px;top:268px" width="9" height="5"><path d="M0 5H9L4.5 0Z" fill="#000"/></svg>
<div style="left:451px;top:662px;width:11px;height:1px;background:#a0a0a0"></div>
<div style="left:451px;top:674px;width:12px;height:1px;background:#a0a0a0"></div>
<div style="left:462px;top:265px;width:1px;height:410px;background:#a0a0a0"></div>
<svg style="left:452px;top:666px" width="9" height="5"><path d="M0 0H9L4.5 5Z" fill="#000"/></svg>
<div style="left:10px;top:276px;width:439px;height:102px;border:1px solid #a0a0a0;box-shadow:inset 1px 1px 0 #fff, 1px 1px 0 #fff"></div>
<div style="left:17px;top:268px;width:426px;height:15px;background:#bccbd9;border-top:1px solid #a8a8a8"></div>
<div style="left:25px;top:269px;width:400px;white-space:pre;font-size:11px;line-height:14px;color:#000;text-align:center">Цвет и освещенность</div>
<div style="left:19px;top:288px;width:13px;height:13px;background:#e6e6e6;border:1px solid #c8c8c8"></div>
<div style="left:35px;top:288px;white-space:pre;font-size:11px;line-height:14px;color:#6d6d6d">Наследовать от родительского материала</div>
<div style="left:19px;top:307px;width:68px;height:65px;background:#fff;border-right:1px solid #a0a0a0"></div>
<svg style="left:97px;top:309px" width="14" height="14"><circle cx="7" cy="7" r="6" fill="#fff" stroke="#333"/><circle cx="7" cy="7" r="3" fill="#222"/></svg>
<div style="left:113px;top:310px;white-space:pre;font-size:11px;line-height:14px;color:#000">Освещенный</div>
<svg style="left:97px;top:330px" width="14" height="14"><circle cx="7" cy="7" r="6" fill="#eee" stroke="#cfcfcf"/></svg>
<div style="left:113px;top:331px;white-space:pre;font-size:11px;line-height:14px;color:#7a7a7a">Основной</div>
<svg style="left:97px;top:346px" width="14" height="14"><circle cx="7" cy="7" r="6" fill="#eee" stroke="#cfcfcf"/></svg>
<div style="left:113px;top:347px;white-space:pre;font-size:11px;line-height:14px;color:#7a7a7a">Блик</div>
<svg style="left:97px;top:362px" width="14" height="14"><circle cx="7" cy="7" r="6" fill="#eee" stroke="#cfcfcf"/></svg>
<div style="left:113px;top:363px;white-space:pre;font-size:11px;line-height:14px;color:#7a7a7a">Самосвечение</div>
<div style="left:199px;top:310px;width:13px;height:13px;background:#fff;border:1px solid #333"></div>
<svg style="left:200px;top:311px" width="11" height="11"><path d="M2 5.5L4.5 8.5L9.5 2" stroke="#000" stroke-width="1.8" fill="none"/></svg>
<div style="left:215px;top:310px;white-space:pre;font-size:11px;line-height:14px;color:#000">Простой цветовой режим</div>
<div style="left:199px;top:325px;width:69px;height:15px;border-top:1px solid #a0a0a0;border-left:1px solid #a0a0a0"></div>
<div style="left:199px;top:326px;width:68px;white-space:pre;font-size:11px;line-height:14px;color:#000;text-align:right">Красный:</div>
<div style="left:274px;top:330px;width:130px;height:3px;background:#e7eaea;border:1px solid #d6d6d6"></div>
<div style="left:401px;top:327px;width:5px;height:9px;background:#f0f0f0;border:1px solid #aaa;border-radius:0 0 2px 2px"></div>
<div style="left:415px;top:326px;width:29px;height:15px;background:#f0f0f0;border:1px solid #dadada"></div>
<div style="left:417px;top:327px;white-space:pre;font-size:11px;line-height:14px;color:#7a7a7a">255</div>
<div style="left:199px;top:341px;width:69px;height:15px;border-top:1px solid #a0a0a0;border-left:1px solid #a0a0a0"></div>
<div style="left:199px;top:342px;width:68px;white-space:pre;font-size:11px;line-height:14px;color:#000;text-align:right">Зелёный:</div>
<div style="left:274px;top:346px;width:130px;height:3px;background:#e7eaea;border:1px solid #d6d6d6"></div>
<div style="left:401px;top:343px;width:5px;height:9px;background:#f0f0f0;border:1px solid #aaa;border-radius:0 0 2px 2px"></div>
<div style="left:415px;top:342px;width:29px;height:15px;background:#f0f0f0;border:1px solid #dadada"></div>
<div style="left:417px;top:343px;white-space:pre;font-size:11px;line-height:14px;color:#7a7a7a">255</div>
<div style="left:199px;top:357px;width:69px;height:15px;border-top:1px solid #a0a0a0;border-left:1px solid #a0a0a0"></div>
<div style="left:199px;top:358px;width:68px;white-space:pre;font-size:11px;line-height:14px;color:#000;text-align:right">Синий:</div>
<div style="left:274px;top:362px;width:130px;height:3px;background:#e7eaea;border:1px solid #d6d6d6"></div>
<div style="left:401px;top:359px;width:5px;height:9px;background:#f0f0f0;border:1px solid #aaa;border-radius:0 0 2px 2px"></div>
<div style="left:415px;top:358px;width:29px;height:15px;background:#f0f0f0;border:1px solid #dadada"></div>
<div style="left:417px;top:359px;white-space:pre;font-size:11px;line-height:14px;color:#7a7a7a">255</div>
<div style="left:17px;top:380px;width:426px;height:15px;background:#bccbd9;border-top:1px solid #a8a8a8"></div>
<div style="left:25px;top:381px;width:400px;white-space:pre;font-size:11px;line-height:14px;color:#000;text-align:center">Параметры прозрачности</div>
<div style="left:17px;top:400px;width:426px;height:15px;background:#bccbd9;border-top:1px solid #a8a8a8"></div>
<div style="left:25px;top:401px;width:400px;white-space:pre;font-size:11px;line-height:14px;color:#000;text-align:center">Расширения</div>
<div style="left:10px;top:431px;width:439px;height:183px;border:1px solid #a0a0a0;box-shadow:inset 1px 1px 0 #fff, 1px 1px 0 #fff"></div>
<div style="left:17px;top:419px;width:426px;height:15px;background:#bccbd9;border-top:1px solid #a8a8a8"></div>
<div style="left:25px;top:420px;width:400px;white-space:pre;font-size:11px;line-height:14px;color:#000;text-align:center">Слои текстур</div>
<div style="left:16px;top:445px;width:13px;height:13px;background:#fff;border:1px solid #333"></div>
<svg style="left:17px;top:446px" width="11" height="11"><path d="M2 5.5L4.5 8.5L9.5 2" stroke="#000" stroke-width="1.8" fill="none"/></svg>
<div style="left:32px;top:440px;width:134px;height:19px;background:linear-gradient(#f2f2f2,#e3e3e3);border:1px solid #3399ff;box-shadow:0 0 0 1px #d8d8d8"></div>
<div style="left:32px;top:442px;width:134px;white-space:pre;font-size:11px;line-height:14px;text-align:center;color:#000">carplate.tga</div>
<div style="left:170px;top:443px;white-space:pre;font-size:11px;line-height:14px;color:#000">применять:</div>
<div style="left:232px;top:440px;width:64px;height:19px;background:linear-gradient(#f2f2f2,#e3e3e3);border:1px solid #acacac;box-shadow:0 0 0 1px #d8d8d8"></div>
<div style="left:234px;top:442px;white-space:pre;font-size:11px;line-height:14px;color:#000">Изменить...</div>
<div style="left:298px;top:440px;width:69px;height:19px;background:linear-gradient(#f2f2f2,#e3e3e3);border:1px solid #acacac"></div>
<div style="left:302px;top:443px;white-space:pre;font-size:11px;line-height:14px;color:#000">Default</div>
<svg style="left:354px;top:446px" width="9" height="6"><path d="M0.5 1L4.5 5L8.5 1" stroke="#333" stroke-width="1.4" fill="none"/></svg>
<div style="left:368px;top:440px;width:23px;height:19px;background:#f0f0f0;border:1px solid #a0a0a0;box-shadow:inset 1px 1px 0 #fff"></div>
<div style="left:393px;top:440px;width:23px;height:19px;background:#f0f0f0;border:1px solid #a0a0a0;box-shadow:inset 1px 1px 0 #fff"></div>
<div style="left:419px;top:440px;width:23px;height:19px;background:#f0f0f0;border:1px solid #a0a0a0;box-shadow:inset 1px 1px 0 #fff"></div>
<svg style="left:368px;top:440px" width="23" height="19"><path d="M4 3.5Q11 7 17.5 15.5M18.5 3Q11 8 4.5 15.5" stroke="#f00000" stroke-width="1.5" fill="none"/></svg>
<svg style="left:393px;top:440px" width="23" height="19"><path d="M4.5 3.5H9.5L11 5V12.5H4.5Z" fill="#fff" stroke="#000" stroke-width="1.2"/><path d="M6 6.5H9M6 8.5H9M6 10.5H9" stroke="#000" stroke-width="0.9"/><path d="M10.5 6.5H16L18.5 9V15.5H10.5Z" fill="#fff" stroke="#000080" stroke-width="1.2"/><path d="M12 9.5H15M12 11.5H17M12 13.5H17" stroke="#000" stroke-width="0.9"/></svg>
<svg style="left:419px;top:440px" width="23" height="19"><rect x="4.5" y="3.5" width="13" height="11.5" rx="1.5" fill="#807a40" stroke="#000" stroke-width="1.2"/><path d="M8 4.5L9.5 2.5H12.5L14 4.5Z" fill="#ff0" stroke="#000" stroke-width="0.8"/><path d="M10.5 8.5H17L18.5 10V15.5H10.5Z" fill="#fff" stroke="#000080" stroke-width="1.2"/><path d="M12.5 11.5H15M12.5 13.5H17" stroke="#000080" stroke-width="0.9"/></svg>
<div style="left:16px;top:466px;width:13px;height:13px;background:#fff;border:1px solid #333"></div>
<svg style="left:17px;top:467px" width="11" height="11"><path d="M2 5.5L4.5 8.5L9.5 2" stroke="#000" stroke-width="1.8" fill="none"/></svg>
<div style="left:32px;top:461px;width:134px;height:19px;background:linear-gradient(#f2f2f2,#e3e3e3);border:1px solid #acacac;box-shadow:0 0 0 1px #d8d8d8"></div>
<div style="left:32px;top:463px;width:134px;white-space:pre;font-size:11px;line-height:14px;text-align:center;color:#000">...</div>
<div style="left:170px;top:464px;white-space:pre;font-size:11px;line-height:14px;color:#000">применять:</div>
<div style="left:232px;top:461px;width:64px;height:19px;background:linear-gradient(#f2f2f2,#e3e3e3);border:1px solid #acacac;box-shadow:0 0 0 1px #d8d8d8"></div>
<div style="left:234px;top:463px;white-space:pre;font-size:11px;line-height:14px;color:#000">Изменить...</div>
<div style="left:298px;top:461px;width:69px;height:19px;background:linear-gradient(#f2f2f2,#e3e3e3);border:1px solid #acacac"></div>
<div style="left:302px;top:464px;white-space:pre;font-size:11px;line-height:14px;color:#000">Default</div>
<svg style="left:354px;top:467px" width="9" height="6"><path d="M0.5 1L4.5 5L8.5 1" stroke="#333" stroke-width="1.4" fill="none"/></svg>
<div style="left:368px;top:461px;width:23px;height:19px;background:#f0f0f0;border:1px solid #a0a0a0;box-shadow:inset 1px 1px 0 #fff"></div>
<div style="left:393px;top:461px;width:23px;height:19px;background:#f0f0f0;border:1px solid #a0a0a0;box-shadow:inset 1px 1px 0 #fff"></div>
<div style="left:419px;top:461px;width:23px;height:19px;background:#f0f0f0;border:1px solid #a0a0a0;box-shadow:inset 1px 1px 0 #fff"></div>
<svg style="left:368px;top:461px" width="23" height="19"><path d="M4 3.5Q11 7 17.5 15.5M18.5 3Q11 8 4.5 15.5" stroke="#f00000" stroke-width="1.5" fill="none"/></svg>
<svg style="left:393px;top:461px" width="23" height="19"><path d="M4.5 3.5H9.5L11 5V12.5H4.5Z" fill="#fff" stroke="#000" stroke-width="1.2"/><path d="M6 6.5H9M6 8.5H9M6 10.5H9" stroke="#000" stroke-width="0.9"/><path d="M10.5 6.5H16L18.5 9V15.5H10.5Z" fill="#fff" stroke="#000080" stroke-width="1.2"/><path d="M12 9.5H15M12 11.5H17M12 13.5H17" stroke="#000" stroke-width="0.9"/></svg>
<svg style="left:419px;top:461px" width="23" height="19"><rect x="4.5" y="3.5" width="13" height="11.5" rx="1.5" fill="#807a40" stroke="#000" stroke-width="1.2"/><path d="M8 4.5L9.5 2.5H12.5L14 4.5Z" fill="#ff0" stroke="#000" stroke-width="0.8"/><path d="M10.5 8.5H17L18.5 10V15.5H10.5Z" fill="#fff" stroke="#000080" stroke-width="1.2"/><path d="M12.5 11.5H15M12.5 13.5H17" stroke="#000080" stroke-width="0.9"/></svg>
<div style="left:16px;top:487px;width:13px;height:13px;background:#e6e6e6;border:1px solid #c8c8c8"></div>
<div style="left:32px;top:482px;width:134px;height:19px;background:#efefef;border:1px solid #d0d0d0;box-shadow:0 0 0 1px #d8d8d8"></div>
<div style="left:32px;top:484px;width:134px;white-space:pre;font-size:11px;line-height:14px;text-align:center;color:#8d8d8d">...</div>
<div style="left:170px;top:485px;white-space:pre;font-size:11px;line-height:14px;color:#8d8d8d">применять:</div>
<div style="left:232px;top:482px;width:64px;height:19px;background:#efefef;border:1px solid #d0d0d0;box-shadow:0 0 0 1px #d8d8d8"></div>
<div style="left:234px;top:484px;white-space:pre;font-size:11px;line-height:14px;color:#8d8d8d">Изменить...</div>
<div style="left:298px;top:482px;width:69px;height:19px;background:#efefef;border:1px solid #d0d0d0"></div>
<div style="left:302px;top:485px;white-space:pre;font-size:11px;line-height:14px;color:#8d8d8d">Default</div>
<svg style="left:354px;top:488px" width="9" height="6"><path d="M0.5 1L4.5 5L8.5 1" stroke="#aaa" stroke-width="1.4" fill="none"/></svg>
<div style="left:368px;top:482px;width:23px;height:19px;background:#f0f0f0;border:1px solid #a0a0a0;box-shadow:inset 1px 1px 0 #fff"></div>
<div style="left:393px;top:482px;width:23px;height:19px;background:#f0f0f0;border:1px solid #a0a0a0;box-shadow:inset 1px 1px 0 #fff"></div>
<div style="left:419px;top:482px;width:23px;height:19px;background:#f0f0f0;border:1px solid #a0a0a0;box-shadow:inset 1px 1px 0 #fff"></div>
<svg style="left:368px;top:482px" width="23" height="19"><path d="M4 3.5Q11 7 17.5 15.5M18.5 3Q11 8 4.5 15.5" stroke="#909090" stroke-width="1.5" fill="none"/></svg>
<svg style="left:393px;top:482px" width="23" height="19"><path d="M4.5 3.5H9.5L11 5V12.5H4.5Z" fill="#fff" stroke="#9a9a9a" stroke-width="1.2"/><path d="M6 6.5H9M6 8.5H9M6 10.5H9" stroke="#9a9a9a" stroke-width="0.9"/><path d="M10.5 6.5H16L18.5 9V15.5H10.5Z" fill="#fff" stroke="#9a9a9a" stroke-width="1.2"/><path d="M12 9.5H15M12 11.5H17M12 13.5H17" stroke="#9a9a9a" stroke-width="0.9"/></svg>
<svg style="left:419px;top:482px" width="23" height="19"><rect x="4" y="3" width="13.5" height="12" rx="2" fill="#a0a0a0"/><rect x="8" y="2" width="5" height="2" fill="#a0a0a0"/><path d="M10.5 8.5H17L18.5 10V15.5H10.5Z" fill="#f4f4f4" stroke="#a0a0a0" stroke-width="1"/><path d="M12.5 11.5H15M12.5 13.5H17" stroke="#a0a0a0" stroke-width="0.9"/></svg>
<div style="left:16px;top:508px;width:13px;height:13px;background:#e6e6e6;border:1px solid #c8c8c8"></div>
<div style="left:32px;top:503px;width:134px;height:19px;background:#efefef;border:1px solid #d0d0d0;box-shadow:0 0 0 1px #d8d8d8"></div>
<div style="left:32px;top:505px;width:134px;white-space:pre;font-size:11px;line-height:14px;text-align:center;color:#8d8d8d">...</div>
<div style="left:170px;top:506px;white-space:pre;font-size:11px;line-height:14px;color:#8d8d8d">применять:</div>
<div style="left:232px;top:503px;width:64px;height:19px;background:#efefef;border:1px solid #d0d0d0;box-shadow:0 0 0 1px #d8d8d8"></div>
<div style="left:234px;top:505px;white-space:pre;font-size:11px;line-height:14px;color:#8d8d8d">Изменить...</div>
<div style="left:298px;top:503px;width:69px;height:19px;background:#efefef;border:1px solid #d0d0d0"></div>
<div style="left:302px;top:506px;white-space:pre;font-size:11px;line-height:14px;color:#8d8d8d">Default</div>
<svg style="left:354px;top:509px" width="9" height="6"><path d="M0.5 1L4.5 5L8.5 1" stroke="#aaa" stroke-width="1.4" fill="none"/></svg>
<div style="left:368px;top:503px;width:23px;height:19px;background:#f0f0f0;border:1px solid #a0a0a0;box-shadow:inset 1px 1px 0 #fff"></div>
<div style="left:393px;top:503px;width:23px;height:19px;background:#f0f0f0;border:1px solid #a0a0a0;box-shadow:inset 1px 1px 0 #fff"></div>
<div style="left:419px;top:503px;width:23px;height:19px;background:#f0f0f0;border:1px solid #a0a0a0;box-shadow:inset 1px 1px 0 #fff"></div>
<svg style="left:368px;top:503px" width="23" height="19"><path d="M4 3.5Q11 7 17.5 15.5M18.5 3Q11 8 4.5 15.5" stroke="#909090" stroke-width="1.5" fill="none"/></svg>
<svg style="left:393px;top:503px" width="23" height="19"><path d="M4.5 3.5H9.5L11 5V12.5H4.5Z" fill="#fff" stroke="#9a9a9a" stroke-width="1.2"/><path d="M6 6.5H9M6 8.5H9M6 10.5H9" stroke="#9a9a9a" stroke-width="0.9"/><path d="M10.5 6.5H16L18.5 9V15.5H10.5Z" fill="#fff" stroke="#9a9a9a" stroke-width="1.2"/><path d="M12 9.5H15M12 11.5H17M12 13.5H17" stroke="#9a9a9a" stroke-width="0.9"/></svg>
<svg style="left:419px;top:503px" width="23" height="19"><rect x="4" y="3" width="13.5" height="12" rx="2" fill="#a0a0a0"/><rect x="8" y="2" width="5" height="2" fill="#a0a0a0"/><path d="M10.5 8.5H17L18.5 10V15.5H10.5Z" fill="#f4f4f4" stroke="#a0a0a0" stroke-width="1"/><path d="M12.5 11.5H15M12.5 13.5H17" stroke="#a0a0a0" stroke-width="0.9"/></svg>
<div style="left:16px;top:529px;width:13px;height:13px;background:#e6e6e6;border:1px solid #c8c8c8"></div>
<div style="left:32px;top:524px;width:134px;height:19px;background:#efefef;border:1px solid #d0d0d0;box-shadow:0 0 0 1px #d8d8d8"></div>
<div style="left:32px;top:526px;width:134px;white-space:pre;font-size:11px;line-height:14px;text-align:center;color:#8d8d8d">...</div>
<div style="left:170px;top:527px;white-space:pre;font-size:11px;line-height:14px;color:#8d8d8d">применять:</div>
<div style="left:232px;top:524px;width:64px;height:19px;background:#efefef;border:1px solid #d0d0d0;box-shadow:0 0 0 1px #d8d8d8"></div>
<div style="left:234px;top:526px;white-space:pre;font-size:11px;line-height:14px;color:#8d8d8d">Изменить...</div>
<div style="left:298px;top:524px;width:69px;height:19px;background:#efefef;border:1px solid #d0d0d0"></div>
<div style="left:302px;top:527px;white-space:pre;font-size:11px;line-height:14px;color:#8d8d8d">Default</div>
<svg style="left:354px;top:530px" width="9" height="6"><path d="M0.5 1L4.5 5L8.5 1" stroke="#aaa" stroke-width="1.4" fill="none"/></svg>
<div style="left:368px;top:524px;width:23px;height:19px;background:#f0f0f0;border:1px solid #a0a0a0;box-shadow:inset 1px 1px 0 #fff"></div>
<div style="left:393px;top:524px;width:23px;height:19px;background:#f0f0f0;border:1px solid #a0a0a0;box-shadow:inset 1px 1px 0 #fff"></div>
<div style="left:419px;top:524px;width:23px;height:19px;background:#f0f0f0;border:1px solid #a0a0a0;box-shadow:inset 1px 1px 0 #fff"></div>
<svg style="left:368px;top:524px" width="23" height="19"><path d="M4 3.5Q11 7 17.5 15.5M18.5 3Q11 8 4.5 15.5" stroke="#909090" stroke-width="1.5" fill="none"/></svg>
<svg style="left:393px;top:524px" width="23" height="19"><path d="M4.5 3.5H9.5L11 5V12.5H4.5Z" fill="#fff" stroke="#9a9a9a" stroke-width="1.2"/><path d="M6 6.5H9M6 8.5H9M6 10.5H9" stroke="#9a9a9a" stroke-width="0.9"/><path d="M10.5 6.5H16L18.5 9V15.5H10.5Z" fill="#fff" stroke="#9a9a9a" stroke-width="1.2"/><path d="M12 9.5H15M12 11.5H17M12 13.5H17" stroke="#9a9a9a" stroke-width="0.9"/></svg>
<svg style="left:419px;top:524px" width="23" height="19"><rect x="4" y="3" width="13.5" height="12" rx="2" fill="#a0a0a0"/><rect x="8" y="2" width="5" height="2" fill="#a0a0a0"/><path d="M10.5 8.5H17L18.5 10V15.5H10.5Z" fill="#f4f4f4" stroke="#a0a0a0" stroke-width="1"/><path d="M12.5 11.5H15M12.5 13.5H17" stroke="#a0a0a0" stroke-width="0.9"/></svg>
<div style="left:16px;top:550px;width:13px;height:13px;background:#e6e6e6;border:1px solid #c8c8c8"></div>
<div style="left:32px;top:545px;width:134px;height:19px;background:#efefef;border:1px solid #d0d0d0;box-shadow:0 0 0 1px #d8d8d8"></div>
<div style="left:32px;top:547px;width:134px;white-space:pre;font-size:11px;line-height:14px;text-align:center;color:#8d8d8d">...</div>
<div style="left:170px;top:548px;white-space:pre;font-size:11px;line-height:14px;color:#8d8d8d">применять:</div>
<div style="left:232px;top:545px;width:64px;height:19px;background:#efefef;border:1px solid #d0d0d0;box-shadow:0 0 0 1px #d8d8d8"></div>
<div style="left:234px;top:547px;white-space:pre;font-size:11px;line-height:14px;color:#8d8d8d">Изменить...</div>
<div style="left:298px;top:545px;width:69px;height:19px;background:#efefef;border:1px solid #d0d0d0"></div>
<div style="left:302px;top:548px;white-space:pre;font-size:11px;line-height:14px;color:#8d8d8d">Default</div>
<svg style="left:354px;top:551px" width="9" height="6"><path d="M0.5 1L4.5 5L8.5 1" stroke="#aaa" stroke-width="1.4" fill="none"/></svg>
<div style="left:368px;top:545px;width:23px;height:19px;background:#f0f0f0;border:1px solid #a0a0a0;box-shadow:inset 1px 1px 0 #fff"></div>
<div style="left:393px;top:545px;width:23px;height:19px;background:#f0f0f0;border:1px solid #a0a0a0;box-shadow:inset 1px 1px 0 #fff"></div>
<div style="left:419px;top:545px;width:23px;height:19px;background:#f0f0f0;border:1px solid #a0a0a0;box-shadow:inset 1px 1px 0 #fff"></div>
<svg style="left:368px;top:545px" width="23" height="19"><path d="M4 3.5Q11 7 17.5 15.5M18.5 3Q11 8 4.5 15.5" stroke="#909090" stroke-width="1.5" fill="none"/></svg>
<svg style="left:393px;top:545px" width="23" height="19"><path d="M4.5 3.5H9.5L11 5V12.5H4.5Z" fill="#fff" stroke="#9a9a9a" stroke-width="1.2"/><path d="M6 6.5H9M6 8.5H9M6 10.5H9" stroke="#9a9a9a" stroke-width="0.9"/><path d="M10.5 6.5H16L18.5 9V15.5H10.5Z" fill="#fff" stroke="#9a9a9a" stroke-width="1.2"/><path d="M12 9.5H15M12 11.5H17M12 13.5H17" stroke="#9a9a9a" stroke-width="0.9"/></svg>
<svg style="left:419px;top:545px" width="23" height="19"><rect x="4" y="3" width="13.5" height="12" rx="2" fill="#a0a0a0"/><rect x="8" y="2" width="5" height="2" fill="#a0a0a0"/><path d="M10.5 8.5H17L18.5 10V15.5H10.5Z" fill="#f4f4f4" stroke="#a0a0a0" stroke-width="1"/><path d="M12.5 11.5H15M12.5 13.5H17" stroke="#a0a0a0" stroke-width="0.9"/></svg>
<div style="left:16px;top:571px;width:13px;height:13px;background:#e6e6e6;border:1px solid #c8c8c8"></div>
<div style="left:32px;top:566px;width:134px;height:19px;background:#efefef;border:1px solid #d0d0d0;box-shadow:0 0 0 1px #d8d8d8"></div>
<div style="left:32px;top:568px;width:134px;white-space:pre;font-size:11px;line-height:14px;text-align:center;color:#8d8d8d">...</div>
<div style="left:170px;top:569px;white-space:pre;font-size:11px;line-height:14px;color:#8d8d8d">применять:</div>
<div style="left:232px;top:566px;width:64px;height:19px;background:#efefef;border:1px solid #d0d0d0;box-shadow:0 0 0 1px #d8d8d8"></div>
<div style="left:234px;top:568px;white-space:pre;font-size:11px;line-height:14px;color:#8d8d8d">Изменить...</div>
<div style="left:298px;top:566px;width:69px;height:19px;background:#efefef;border:1px solid #d0d0d0"></div>
<div style="left:302px;top:569px;white-space:pre;font-size:11px;line-height:14px;color:#8d8d8d">Default</div>
<svg style="left:354px;top:572px" width="9" height="6"><path d="M0.5 1L4.5 5L8.5 1" stroke="#aaa" stroke-width="1.4" fill="none"/></svg>
<div style="left:368px;top:566px;width:23px;height:19px;background:#f0f0f0;border:1px solid #a0a0a0;box-shadow:inset 1px 1px 0 #fff"></div>
<div style="left:393px;top:566px;width:23px;height:19px;background:#f0f0f0;border:1px solid #a0a0a0;box-shadow:inset 1px 1px 0 #fff"></div>
<div style="left:419px;top:566px;width:23px;height:19px;background:#f0f0f0;border:1px solid #a0a0a0;box-shadow:inset 1px 1px 0 #fff"></div>
<svg style="left:368px;top:566px" width="23" height="19"><path d="M4 3.5Q11 7 17.5 15.5M18.5 3Q11 8 4.5 15.5" stroke="#909090" stroke-width="1.5" fill="none"/></svg>
<svg style="left:393px;top:566px" width="23" height="19"><path d="M4.5 3.5H9.5L11 5V12.5H4.5Z" fill="#fff" stroke="#9a9a9a" stroke-width="1.2"/><path d="M6 6.5H9M6 8.5H9M6 10.5H9" stroke="#9a9a9a" stroke-width="0.9"/><path d="M10.5 6.5H16L18.5 9V15.5H10.5Z" fill="#fff" stroke="#9a9a9a" stroke-width="1.2"/><path d="M12 9.5H15M12 11.5H17M12 13.5H17" stroke="#9a9a9a" stroke-width="0.9"/></svg>
<svg style="left:419px;top:566px" width="23" height="19"><rect x="4" y="3" width="13.5" height="12" rx="2" fill="#a0a0a0"/><rect x="8" y="2" width="5" height="2" fill="#a0a0a0"/><path d="M10.5 8.5H17L18.5 10V15.5H10.5Z" fill="#f4f4f4" stroke="#a0a0a0" stroke-width="1"/><path d="M12.5 11.5H15M12.5 13.5H17" stroke="#a0a0a0" stroke-width="0.9"/></svg>
<div style="left:16px;top:592px;width:13px;height:13px;background:#e6e6e6;border:1px solid #c8c8c8"></div>
<div style="left:32px;top:587px;width:134px;height:19px;background:#efefef;border:1px solid #d0d0d0;box-shadow:0 0 0 1px #d8d8d8"></div>
<div style="left:32px;top:589px;width:134px;white-space:pre;font-size:11px;line-height:14px;text-align:center;color:#8d8d8d">...</div>
<div style="left:170px;top:590px;white-space:pre;font-size:11px;line-height:14px;color:#8d8d8d">применять:</div>
<div style="left:232px;top:587px;width:64px;height:19px;background:#efefef;border:1px solid #d0d0d0;box-shadow:0 0 0 1px #d8d8d8"></div>
<div style="left:234px;top:589px;white-space:pre;font-size:11px;line-height:14px;color:#8d8d8d">Изменить...</div>
<div style="left:298px;top:587px;width:69px;height:19px;background:#efefef;border:1px solid #d0d0d0"></div>
<div style="left:302px;top:590px;white-space:pre;font-size:11px;line-height:14px;color:#8d8d8d">Default</div>
<svg style="left:354px;top:593px" width="9" height="6"><path d="M0.5 1L4.5 5L8.5 1" stroke="#aaa" stroke-width="1.4" fill="none"/></svg>
<div style="left:368px;top:587px;width:23px;height:19px;background:#f0f0f0;border:1px solid #a0a0a0;box-shadow:inset 1px 1px 0 #fff"></div>
<div style="left:393px;top:587px;width:23px;height:19px;background:#f0f0f0;border:1px solid #a0a0a0;box-shadow:inset 1px 1px 0 #fff"></div>
<div style="left:419px;top:587px;width:23px;height:19px;background:#f0f0f0;border:1px solid #a0a0a0;box-shadow:inset 1px 1px 0 #fff"></div>
<svg style="left:368px;top:587px" width="23" height="19"><path d="M4 3.5Q11 7 17.5 15.5M18.5 3Q11 8 4.5 15.5" stroke="#909090" stroke-width="1.5" fill="none"/></svg>
<svg style="left:393px;top:587px" width="23" height="19"><path d="M4.5 3.5H9.5L11 5V12.5H4.5Z" fill="#fff" stroke="#9a9a9a" stroke-width="1.2"/><path d="M6 6.5H9M6 8.5H9M6 10.5H9" stroke="#9a9a9a" stroke-width="0.9"/><path d="M10.5 6.5H16L18.5 9V15.5H10.5Z" fill="#fff" stroke="#9a9a9a" stroke-width="1.2"/><path d="M12 9.5H15M12 11.5H17M12 13.5H17" stroke="#9a9a9a" stroke-width="0.9"/></svg>
<svg style="left:419px;top:587px" width="23" height="19"><rect x="4" y="3" width="13.5" height="12" rx="2" fill="#a0a0a0"/><rect x="8" y="2" width="5" height="2" fill="#a0a0a0"/><path d="M10.5 8.5H17L18.5 10V15.5H10.5Z" fill="#f4f4f4" stroke="#a0a0a0" stroke-width="1"/><path d="M12.5 11.5H15M12.5 13.5H17" stroke="#a0a0a0" stroke-width="0.9"/></svg>
<div style="left:452px;top:463px;white-space:pre;font-size:12px;line-height:14px;color:#000">&#8801;</div>
<svg style="left:452px;top:695px" width="10" height="10"><g fill="#b8b8b8"><rect x="7" y="1" width="2" height="2"/><rect x="4" y="4" width="2" height="2"/><rect x="7" y="4" width="2" height="2"/><rect x="1" y="7" width="2" height="2"/><rect x="4" y="7" width="2" height="2"/><rect x="7" y="7" width="2" height="2"/></g></svg>
<div style="left:241px;top:680px;width:146px;height:22px;background:linear-gradient(#f2f2f2,#e3e3e3);border:1px solid #acacac;box-shadow:0 0 0 1px #d8d8d8"></div>
<div style="left:241px;top:684px;width:146px;white-space:pre;font-size:11px;line-height:14px;color:#000;text-align:center">Применить к выделенному</div>
<div style="left:393px;top:681px;width:53px;height:21px;background:linear-gradient(#f2f2f2,#e3e3e3);border:1px solid #3399ff;box-shadow:0 0 0 1px #d8d8d8"></div>
<div style="left:393px;top:684px;width:53px;white-space:pre;font-size:11px;line-height:14px;color:#000;text-align:center">OK</div>
<svg style="left:0;top:0" width="1359" height="767">
<g stroke="#ff0000" stroke-width="3.6" stroke-linecap="round" stroke-linejoin="miter" fill="none">
<path d="M228 238L154 382L280 662"/><path d="M154 382L417 670"/>
</g>
<g fill="#ff0000">
<path d="M228.6 235L218.3 246L225.7 250Z"/>
<path d="M283.5 671L274 659.5L283 656Z"/>
<path d="M421 677L408.5 670L417.5 665.5Z"/>
</g></svg></body></html>
